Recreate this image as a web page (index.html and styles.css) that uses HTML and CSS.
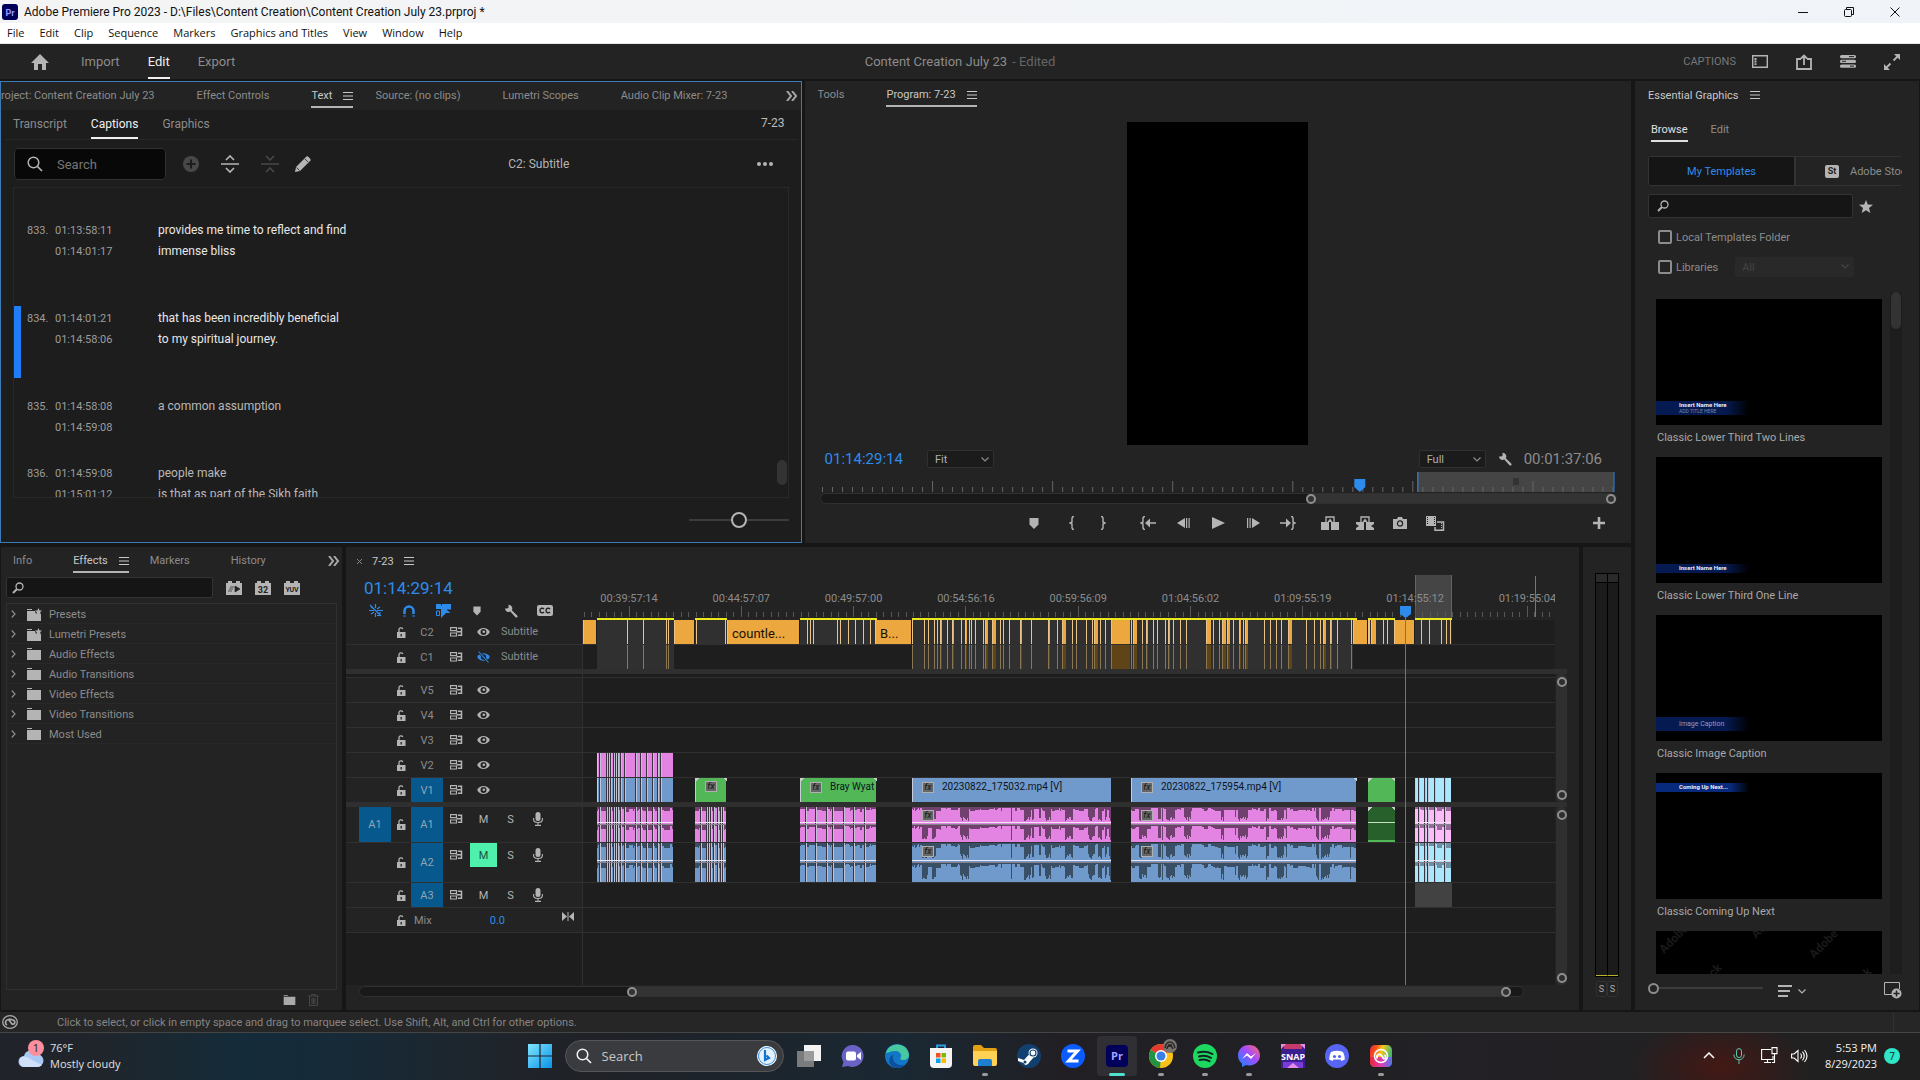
FILE: index.html
```html
<!DOCTYPE html>
<html lang="en">
<head>
    <meta charset="UTF-8">
    <meta name="viewport" content="width=device-width, initial-scale=1.0">
    <title>Adobe Premiere Pro 2023</title>
    <link rel="stylesheet" href="styles.css">
</head>
<body>
    <!-- icon sprite -->
    <svg class="sprite" width="0" height="0" aria-hidden="true">
        <symbol id="i-menu" viewBox="0 0 10 8"><path d="M0 .5h10M0 4h10M0 7.500h10" stroke="currentColor" stroke-width="1"/></symbol>
        <symbol id="i-more" viewBox="0 0 12 10"><path d="M1 0l4 5-4 5M6 0l4 5-4 5" fill="none" stroke="currentColor" stroke-width="2"/></symbol>
        <symbol id="i-chev" viewBox="0 0 8 5"><path d="M.5.5L4 4 7.500.5" fill="none" stroke="currentColor" stroke-width="1.200"/></symbol>
        <symbol id="i-right" viewBox="0 0 5 8"><path d="M.8.5L4 4 .8 7.500" fill="none" stroke="currentColor" stroke-width="1.200"/></symbol>
        <symbol id="i-find" viewBox="0 0 12 12"><circle cx="7.500" cy="4.500" r="3.500" fill="none" stroke="currentColor" stroke-width="1.300"/><path d="M5 7L1 11" stroke="currentColor" stroke-width="2"/></symbol>
        <symbol id="i-search" viewBox="0 0 16 16"><circle cx="6.500" cy="6.500" r="5.300" fill="none" stroke="currentColor" stroke-width="1.500"/><path d="M10.500 10.500L15 15" stroke="currentColor" stroke-width="1.700"/></symbol>
        <symbol id="i-wrench" viewBox="0 0 14 14"><path d="M1 4.500A3.600 3.600 0 0 0 6.300 7.600l5.200 5.600a1.200 1.200 0 0 0 1.700-1.700L7.800 6.200A3.600 3.600 0 0 0 4.500.8v3L3 4.600z" fill="currentColor"/></symbol>
        <symbol id="i-marker" viewBox="0 0 10 11"><path d="M.5 0h9v6.500L5 11 .5 6.500z" fill="currentColor"/></symbol>
        <symbol id="i-lock" viewBox="0 0 10 11"><path d="M1 5h8.500v6H1z" fill="currentColor"/><path d="M3 5V2.500C3 .8 6 .2 6.800 2" fill="none" stroke="currentColor" stroke-width="1.300"/><path d="M5.200 7v2.500" stroke="#232323" stroke-width="1.300"/></symbol>
        <symbol id="i-sync" viewBox="0 0 13 10"><path d="M.5.7h6v3h-6zM.5 6h6v3h-6z" fill="none" stroke="currentColor" stroke-width="1.200"/><path d="M8 1.200h3.500v7H8M6.500 4.800h5" fill="none" stroke="currentColor" stroke-width="1.500"/></symbol>
        <symbol id="i-eye" viewBox="0 0 13 10"><path d="M.2 5C2.500-.2 10.500-.2 12.800 5 10.500 10.200 2.500 10.200.2 5z" fill="currentColor"/><circle cx="6.500" cy="5" r="3" fill="#232323"/><circle cx="6.800" cy="4.800" r="1.300" fill="currentColor"/></symbol>
        <symbol id="i-eye-off" viewBox="0 0 13 12"><path d="M.2 6C2.500 1 10.500 1 12.800 6 10.500 11 2.500 11 .2 6z" fill="currentColor"/><circle cx="6.500" cy="6" r="2.700" fill="#232323"/><circle cx="6.500" cy="6" r="1.400" fill="currentColor"/><path d="M1.500 .5l10 11" stroke="#232323" stroke-width="2.600"/><path d="M1.500 .5l10 11" stroke="currentColor" stroke-width="1.100"/></symbol>
        <symbol id="i-mic" viewBox="0 0 10 14"><rect x="2.500" y="0" width="5" height="9" rx="2.500" fill="currentColor"/><path d="M.6 6v1.500C.6 11.500 9.400 11.500 9.400 7.500V6M5 10.500v3M2 13.400h6" fill="none" stroke="currentColor" stroke-width="1.100"/></symbol>
        <symbol id="i-folder" viewBox="0 0 14 12"><path d="M0 0h5v1H0zM0 2h14v10H0z" fill="currentColor"/></symbol>
        <symbol id="i-folder-star" viewBox="0 0 15 13"><path d="M0 1h5v1H0zM0 3h8l1 3 3-1 2 1.500V13H0z" fill="currentColor"/><path d="M11.500 0l1.100 2.400 2.400.2-1.800 1.700.6 2.600-2.300-1.400-2.300 1.400.6-2.600L8 2.600l2.400-.2z" fill="currentColor"/></symbol>
        <symbol id="i-cc" viewBox="0 0 16 11"><rect width="16" height="11" rx="2" fill="currentColor"/><path d="M7 4C6 2.800 3 2.800 3 5.500S6 8.200 7 7M13 4c-1-1.200-4-1.200-4 1.500S12 8.200 13 7" fill="none" stroke="#232323" stroke-width="1.400"/></symbol>
    </svg>

    <div class="titlebar">
        <svg class="pr-badge" viewBox="0 0 16 16"><rect width="16" height="16" rx="3" fill="#00005b"/><text x="8" y="12" text-anchor="middle" font-size="9" font-weight="bold" fill="#9999ff">Pr</text></svg>
        <span class="titlebar-text">Adobe Premiere Pro 2023 - D:\Files\Content Creation\Content Creation July 23.prproj *</span>
        <div class="window-buttons">
            <button title="Minimize"><svg width="10" height="10"><path d="M0 5.500h10" stroke="#111"/></svg></button>
            <button title="Restore"><svg width="10" height="10"><rect x=".5" y="2.500" width="7" height="7" rx="1" fill="none" stroke="#111"/><path d="M2.500 2V.5h7v7H8" fill="none" stroke="#111"/></svg></button>
            <button title="Close"><svg width="10" height="10"><path d="M.5.5l9 9M9.500.5l-9 9" stroke="#111"/></svg></button>
        </div>
    </div>
    <nav class="menubar">
        <a href="#">File</a><a href="#">Edit</a><a href="#">Clip</a><a href="#">Sequence</a><a href="#">Markers</a><a href="#">Graphics and Titles</a><a href="#">View</a><a href="#">Window</a><a href="#">Help</a>
    </nav>

    <header class="header">
        <div class="header-nav">
            <button class="home" title="Home"><svg width="18" height="16"><path d="M9 0l9 9h-3v7h-4v-6H7v6H3V9H0z" fill="#b4b4b4"/></svg></button>
            <button class="mode">Import</button>
            <button class="mode active">Edit</button>
            <button class="mode">Export</button>
        </div>
        <div class="project-name">Content Creation July 23 <span>- Edited</span></div>
        <div class="header-tools">
            <span class="workspace">CAPTIONS</span>
            <button title="Workspaces"><svg width="16" height="13"><path d="M.7.7h14.600v11.600H.7z" fill="none" stroke="currentColor" stroke-width="1.400"/><path d="M3.500 3v7" stroke="currentColor" stroke-width="2" stroke-dasharray="2 .6"/></svg></button>
            <button title="Quick export"><svg width="16" height="16"><path d="M5 5H1v10h14V5h-4M8 11V2M5 4.500L8 1.500l3 3" fill="none" stroke="currentColor" stroke-width="1.800"/></svg></button>
            <button title="Progress"><svg width="16" height="13"><rect width="16" height="3.200" rx="1.500" fill="currentColor"/><rect y="4.700" width="16" height="3.200" rx="1.500" fill="currentColor"/><rect y="9.500" width="16" height="3.200" rx="1.500" fill="currentColor"/><path d="M9 1.600h5M2 6.300h4M10 11.100h4" stroke="#232323"/></svg></button>
            <button title="Full screen"><svg width="16" height="16"><path d="M9.500 6.500L14 2M6.500 9.500L2 14" stroke="currentColor" stroke-width="1.800"/><path d="M10 0h6v6zM6 16H0v-6z" fill="currentColor"/></svg></button>
        </div>
    </header>

    <main class="workspace-area">
        <div class="left-area">
            <div class="top-row">
                <section class="panel text-panel">
                    <div class="tabs source-tabs">
                        <button class="tab">roject: Content Creation July 23</button>
                        <button class="tab">Effect Controls</button>
                        <button class="tab active">Text <svg class="burger"><use href="#i-menu"/></svg></button>
                        <button class="tab">Source: (no clips)</button>
                        <button class="tab">Lumetri Scopes</button>
                        <button class="tab">Audio Clip Mixer: 7-23</button>
                        <button class="tab-more" title="More panels"><svg width="12" height="10"><use href="#i-more"/></svg></button>
                    </div>
                    <div class="subtabs">
                        <button>Transcript</button>
                        <button class="active">Captions</button>
                        <button>Graphics</button>
                        <span class="sequence-name">7-23</span>
                    </div>
                    <div class="caption-tools">
                        <label class="caption-search">
                            <svg width="16" height="16"><use href="#i-search"/></svg>
                            <input type="text" placeholder="Search" aria-label="Search captions">
                        </label>
                        <button class="off" title="Add caption"><svg width="16" height="16"><circle cx="8" cy="8" r="8" fill="currentColor"/><path d="M8 3.500v9M3.500 8h9" stroke="#1d1d1d" stroke-width="2"/></svg></button>
                        <button title="Split caption"><svg width="18" height="18"><path d="M0 9h18M5 5l4-4 4 4M5 13l4 4 4-4" fill="none" stroke="currentColor" stroke-width="1.700"/></svg></button>
                        <button class="off" title="Merge captions"><svg width="18" height="18"><path d="M0 9h18M5 1l4 4 4-4M5 17l4-4 4 4" fill="none" stroke="currentColor" stroke-width="1.700"/></svg></button>
                        <button class="pencil" title="Edit caption"><svg width="16" height="16"><path d="M0 16l1-5L11.500.5c1-1 5 3 4 4L5 15z" fill="currentColor"/><path d="M10 3l3 3M1.500 11.500l3 3" stroke="#1d1d1d" stroke-width=".8"/></svg></button>
                        <span class="caption-track">C2: Subtitle</span>
                        <button title="More"><svg width="16" height="4"><circle cx="2" cy="2" r="2" fill="currentColor"/><circle cx="8" cy="2" r="2" fill="currentColor"/><circle cx="14" cy="2" r="2" fill="currentColor"/></svg></button>
                    </div>
                    <div class="caption-box">
                        <ul class="captions">
                            <li class="caption shown"><span class="num">833.</span><span class="times">01:13:58:11<br>01:14:01:17</span><p>provides me time to reflect and find<br>immense bliss</p></li>
                            <li class="caption shown current"><span class="num">834.</span><span class="times">01:14:01:21<br>01:14:58:06</span><p>that has been incredibly beneficial<br>to my spiritual journey.</p></li>
                            <li class="caption"><span class="num">835.</span><span class="times">01:14:58:08<br>01:14:59:08</span><p>a common assumption</p></li>
                            <li class="caption"><span class="num">836.</span><span class="times">01:14:59:08<br>01:15:01:12</span><p>people make<br>is that as part of the Sikh faith,</p></li>
                        </ul>
                        <div class="caption-scroll"></div>
                    </div>
                    <div class="text-size"><input type="range" aria-label="Text size" value="50"></div>
                </section>

                <section class="panel program-panel">
                    <div class="tabs">
                        <button class="tab">Tools</button>
                        <button class="tab active">Program: 7-23 <svg class="burger"><use href="#i-menu"/></svg></button>
                    </div>
                    <div class="viewer"><div class="frame"></div></div>
                    <div class="program-info">
                        <span class="timecode">01:14:29:14</span>
                        <span class="picker"><select aria-label="Zoom level"><option>Fit</option></select><svg width="8" height="5"><use href="#i-chev"/></svg></span>
                        <span class="picker resolution"><select aria-label="Playback resolution"><option>Full</option></select><svg width="8" height="5"><use href="#i-chev"/></svg></span>
                        <button class="wrench" title="Settings"><svg width="14" height="14"><use href="#i-wrench"/></svg></button>
                        <span class="duration">00:01:37:06</span>
                    </div>
                    <div class="program-ruler"><svg id="program-ruler" viewBox="0 0 797 21" preserveAspectRatio="none"></svg></div>
                    <div class="zoombar program-zoom"><div class="zoombar-thumb"></div></div>
                    <div class="transport">
                        <div class="transport-buttons">
                            <button class="first" title="Add marker"><svg width="10" height="11"><use href="#i-marker"/></svg></button>
                            <button class="mark" title="Mark in"><svg width="6" height="14"><path d="M5 .5H4L3 2v4L1 7l2 1v4l1 1.500h1" fill="none" stroke="currentColor" stroke-width="1.400"/></svg></button>
                            <button class="mark last" title="Mark out"><svg width="6" height="14"><path d="M1 .5h1L3 2v4l2 1-2 1v4l-1 1.500H1" fill="none" stroke="currentColor" stroke-width="1.400"/></svg></button>
                            <button title="Go to in"><svg width="16" height="14"><path d="M5 .5H4L3 2v4L1 7l2 1v4l1 1.500h1M8 7h8" fill="none" stroke="currentColor" stroke-width="1.400"/><path d="M5 7l5-4.500v9z" fill="currentColor"/></svg></button>
                            <button title="Step back"><svg width="13" height="10"><path d="M8 0v10L0 5zM9 0h1.200v10H9zM11.500 0h1.200v10h-1.200z" fill="currentColor"/></svg></button>
                            <button title="Play"><svg width="13" height="12"><path d="M0 0l13 6-13 6z" fill="currentColor"/></svg></button>
                            <button title="Step forward"><svg width="13" height="10"><path d="M5 0v10l8-5zM0 0h1.200v10H0zM2.500 0h1.200v10H2.500z" fill="currentColor"/></svg></button>
                            <button class="wide" title="Go to out"><svg width="16" height="14"><path d="M11 .5h1L13 2v4l2 1-2 1v4l-1 1.500h-1M0 7h8" fill="none" stroke="currentColor" stroke-width="1.400"/><path d="M11 7L6 2.500v9z" fill="currentColor"/></svg></button>
                            <button title="Lift"><svg width="18" height="14"><path d="M0 6h8v8H0zM10 6h8v8h-8z" fill="currentColor"/><path d="M5 7V1h8v6" fill="none" stroke="currentColor" stroke-width="1.300"/><path d="M6.500 6L9 2.500 11.500 6z" fill="currentColor"/></svg></button>
                            <button title="Extract"><svg width="18" height="14"><path d="M0 6h8v8H0zM10 6h8v8h-8z" fill="currentColor"/><path d="M0 8l3 2-3 2zM18 8l-3 2 3 2z" fill="#232323"/><path d="M5 7V1h8v6" fill="none" stroke="currentColor" stroke-width="1.300"/><path d="M6.500 6L9 2.500 11.500 6z" fill="currentColor"/></svg></button>
                            <button title="Export frame"><svg width="14" height="12"><path d="M0 2h4l1-2h4l1 2h4v10H0z" fill="currentColor"/><circle cx="7" cy="6.500" r="2.600" fill="none" stroke="#232323" stroke-width="1.200"/></svg></button>
                            <button title="Comparison view"><svg width="19" height="15"><path d="M0 0h10v10H0z" fill="currentColor"/><path d="M1.500 1v8M8.500 1v8" stroke="#232323" stroke-dasharray="1 1"/><path d="M11 6h6.500v8.300H9V11" fill="none" stroke="currentColor" stroke-width="1.500"/><path d="M15.500 7v7" stroke="currentColor" stroke-dasharray="1 1"/></svg></button>
                        </div>
                        <button class="add" title="Button editor"><svg width="12" height="12"><path d="M6 0v12M0 6h12" stroke="currentColor" stroke-width="2.600"/></svg></button>
                    </div>
                </section>
            </div>

            <div class="bottom-row">
                <section class="panel effects-panel">
                    <div class="tabs">
                        <button class="tab">Info</button>
                        <button class="tab active">Effects <svg class="burger"><use href="#i-menu"/></svg></button>
                        <button class="tab">Markers</button>
                        <button class="tab">History</button>
                        <button class="tab-more" title="More panels"><svg width="12" height="10"><use href="#i-more"/></svg></button>
                    </div>
                    <div class="effects-search">
                        <label class="field"><svg width="12" height="12"><use href="#i-find"/></svg><input type="text" aria-label="Search effects"></label>
                        <button title="Accelerated effects"><svg width="16" height="14"><path d="M0 2h2V0h4v2h4V0h4v2h2v12H0z" fill="#b4b4b4"/><path d="M9 5v6l5-3zM4 6h4M3 8h4M2 10h4" fill="#232323" stroke="#232323" stroke-width=".7"/></svg></button>
                        <button title="32-bit color"><svg width="16" height="14"><path d="M0 2h2V0h4v2h4V0h4v2h2v12H0z" fill="#b4b4b4"/><text x="8" y="11.500" text-anchor="middle" font-size="9" font-weight="bold" fill="#232323">32</text></svg></button>
                        <button title="YUV effects"><svg width="16" height="14"><path d="M0 2h2V0h4v2h4V0h4v2h2v12H0z" fill="#b4b4b4"/><text x="8" y="11" text-anchor="middle" font-size="7" font-weight="bold" fill="#232323">YUV</text></svg></button>
                    </div>
                    <ul class="effects-list">
                        <li><svg class="arrow"><use href="#i-right"/></svg><svg class="folder star"><use href="#i-folder-star"/></svg>Presets</li>
                        <li><svg class="arrow"><use href="#i-right"/></svg><svg class="folder star"><use href="#i-folder-star"/></svg>Lumetri Presets</li>
                        <li><svg class="arrow"><use href="#i-right"/></svg><svg class="folder"><use href="#i-folder"/></svg>Audio Effects</li>
                        <li><svg class="arrow"><use href="#i-right"/></svg><svg class="folder"><use href="#i-folder"/></svg>Audio Transitions</li>
                        <li><svg class="arrow"><use href="#i-right"/></svg><svg class="folder"><use href="#i-folder"/></svg>Video Effects</li>
                        <li><svg class="arrow"><use href="#i-right"/></svg><svg class="folder"><use href="#i-folder"/></svg>Video Transitions</li>
                        <li><svg class="arrow"><use href="#i-right"/></svg><svg class="folder"><use href="#i-folder"/></svg>Most Used</li>
                    </ul>
                    <div class="effects-footer">
                        <button title="New bin"><svg width="13" height="10"><use href="#i-folder"/></svg></button>
                        <button class="off" title="Delete"><svg width="11" height="12"><path d="M0 2h11M3.500 2V.6h4V2M1.500 2v9.400h8V2M4 4v6M5.500 4v6M7 4v6" fill="none" stroke="currentColor"/></svg></button>
                    </div>
                </section>

                <section class="panel timeline-panel">
                    <div class="timeline-tab">
                        <button class="close" title="Close"><svg width="5" height="5"><path d="M0 0l5 5M5 0L0 5" stroke="currentColor"/></svg></button>
                        <span>7-23</span>
                        <svg class="burger"><use href="#i-menu"/></svg>
                    </div>
                    <div class="timeline-body">
                        <div class="timeline-top">
                            <div class="timeline-head">
                                <span class="timecode">01:14:29:14</span>
                                <div class="timeline-tools">
                                    <button class="on" title="Insert as nest"><svg width="15" height="13"><path d="M7.500 0v4M7.500 9v4M1 6.500h5M9 6.500h6M3 3l3 2M12 3L9 5M3 10l3-2M9 9h4M9 11.500h3M2 1l11 11" fill="none" stroke="currentColor" stroke-width="1.200"/></svg></button>
                                    <button class="on" title="Snap"><svg width="12" height="12"><path d="M1.500 9V6a4.500 4.500 0 0 1 9 0v3" fill="none" stroke="currentColor" stroke-width="2.500"/><path d="M.2 10h2.600v2H.2zM9.200 10h2.600v2H9.200z" fill="#1d5c99"/></svg></button>
                                    <button class="on" title="Linked selection"><svg width="15" height="14"><path d="M0 0h5v5H0zM6 0h9v5.500H6zM5 1l9.500 8H10l-5 5z" fill="currentColor"/><path d="M.5 7h3v4.500h-3z" fill="none" stroke="currentColor"/></svg></button>
                                    <button title="Add marker"><svg width="8" height="10"><use href="#i-marker"/></svg></button>
                                    <button title="Timeline settings"><svg width="14" height="14"><use href="#i-wrench"/></svg></button>
                                    <button title="Caption options"><svg width="16" height="11"><use href="#i-cc"/></svg></button>
                                </div>
                            </div>
                            <div class="ruler" id="ruler"></div>
                        </div>
                        <div class="track-section" id="caption-tracks"><div class="tracks"></div><div class="no-scroll"></div></div>
                        <div class="divider"></div>
                        <div class="track-section" id="video-tracks"><div class="tracks"><div class="track-spacer"></div></div><div class="vscroll"></div></div>
                        <div class="divider"></div>
                        <div class="track-section grow" id="audio-tracks"><div class="tracks"></div><div class="vscroll"></div></div>
                        <div class="playhead-layer" id="playhead-layer"></div>
                    </div>
                    <div class="zoombar timeline-zoom"><div class="zoombar-thumb"></div></div>
                </section>

                <section class="panel meters-panel">
                    <div class="meters"><div class="meter"></div><div class="meter"></div></div>
                    <div class="solo"><button>S</button><button>S</button></div>
                </section>
            </div>
        </div>

        <aside class="panel graphics-panel">
            <div class="graphics-title">Essential Graphics <svg class="burger"><use href="#i-menu"/></svg></div>
            <div class="graphics-tabs"><button class="active">Browse</button><button>Edit</button></div>
            <div class="template-source">
                <button class="active">My Templates</button>
                <button><span class="st">St</span>Adobe Stock</button>
            </div>
            <div class="template-search">
                <label class="field"><svg width="12" height="12"><use href="#i-find"/></svg><input type="text" aria-label="Search templates"></label>
                <button title="Favorites"><svg width="14" height="13"><path d="M7 0l1.800 4.500 5.200.3-4 3.200 1.400 5L7 10.200 2.600 13 4 8 0 4.800l5.200-.3z" fill="#b4b4b4"/></svg></button>
            </div>
            <div class="template-filter"><label><input type="checkbox">Local Templates Folder</label></div>
            <div class="template-filter">
                <label><input type="checkbox">Libraries</label>
                <span class="picker disabled"><select aria-label="Library" disabled><option>All</option></select><svg width="8" height="5"><use href="#i-chev"/></svg></span>
            </div>
            <div class="template-list">
                <div class="templates">
                    <figure><div class="thumb low"><div class="banner tall"><b>Insert Name Here</b><small>ADD TITLE HERE</small></div></div><figcaption>Classic Lower Third Two Lines</figcaption></figure>
                    <figure><div class="thumb low"><div class="banner"><b>Insert Name Here</b></div></div><figcaption>Classic Lower Third One Line</figcaption></figure>
                    <figure><div class="thumb low"><div class="banner tall dim"><span>Image Caption</span></div></div><figcaption>Classic Image Caption</figcaption></figure>
                    <figure><div class="thumb"><div class="banner bright"><b>Coming Up Next...</b></div></div><figcaption>Classic Coming Up Next</figcaption></figure>
                    <figure><div class="thumb"><svg width="226" height="126" class="watermark"><text transform="translate(8 23) rotate(-45)">Adobe Stock</text><text transform="translate(100 8) rotate(-45)">Adobe Stock</text><text transform="translate(158 28) rotate(-45)">Adobe Stock</text><text transform="translate(18 86) rotate(-45)">Adobe Stock</text><text transform="translate(168 90) rotate(-45)">Adobe Stock</text></svg></div></figure>
                </div>
                <div class="template-scroll"><div></div></div>
            </div>
            <div class="template-footer">
                <input type="range" aria-label="Thumbnail size" value="0">
                <button class="sort" title="Sort"><svg width="14" height="12"><path d="M0 1h14M0 6h12M0 11h10" stroke="currentColor" stroke-width="2"/></svg><svg width="8" height="5"><use href="#i-chev"/></svg></button>
                <button class="new" title="New layer"><svg width="18" height="17"><path d="M8 12.500H.5v-12h15V7" fill="none" stroke="currentColor"/><circle cx="12.500" cy="11.500" r="5" fill="currentColor"/><path d="M12.500 8.500v6M9.500 11.500h6" stroke="#232323" stroke-width="1.500"/></svg></button>
            </div>
        </aside>
    </main>

    <footer class="statusbar">
        <svg width="16" height="14" viewBox="0 0 16 14"><ellipse cx="8" cy="7" rx="7.300" ry="6.300" fill="none" stroke="#aaa" stroke-width="1.300"/><path d="M5 10C2 8 4 4 7 5l3 4c3 1 4-3 1-4S6 3 8 6" fill="none" stroke="#aaa" stroke-width="1.600"/></svg>
        <span>Click to select, or click in empty space and drag to marquee select. Use Shift, Alt, and Ctrl for other options.</span>
    </footer>

    <div class="taskbar">
        <button class="weather">
            <svg width="28" height="32" viewBox="0 0 28 32"><path d="M6 27a5.500 5.500 0 0 1 0-11 7 7 0 0 1 13-2 6.500 6.500 0 0 1 0 13z" fill="#a9c8f3"/><path d="M6 27a5.500 5.500 0 0 1-2-10c5-2 10 4 20 8-1 1-3 2-5 2z" fill="#cfe0f8"/><circle cx="18" cy="8" r="8" fill="#ff8f9c"/><text x="18" y="12" text-anchor="middle" font-size="11" fill="#222">1</text></svg>
            <span>76°F<br>Mostly cloudy</span>
        </button>
        <div class="dock">
            <button class="app" title="Start"><svg width="24" height="24"><path d="M0 0h11.400v11.400H0zM12.600 0H24v11.400H12.600zM0 12.600h11.400V24H0zM12.600 12.600H24V24H12.600z" fill="url(#g-win)"/><defs><linearGradient id="g-win" x2="1" y2="1"><stop stop-color="#7fe6ff"/><stop offset="1" stop-color="#0a93e8"/></linearGradient></defs></svg></button>
            <label class="dock-search"><svg width="16" height="16"><use href="#i-search"/></svg><input type="text" placeholder="Search" aria-label="Search"><svg width="20" height="20"><circle cx="10" cy="10" r="10" fill="#fff"/><circle cx="10" cy="10" r="8.500" fill="#e4f1fb" stroke="#2f8fe0"/><path d="M8 4v10l4-2-2.500-2.500" fill="none" stroke="#1372d6" stroke-width="2.200"/></svg></label>
            <button class="app" title="Task view"><svg width="24" height="24"><rect x="7" y="1" width="17" height="16" fill="#f3f3f3"/><rect x="0" y="7" width="17" height="16" fill="#8b8b8b" opacity=".85"/></svg></button>
            <button class="app" title="Chat"><svg width="24" height="24"><path d="M12 1a11 11 0 1 1-5 21l-6 1 1.500-5A11 11 0 0 1 12 1z" fill="#6a62c4"/><rect x="5" y="7.500" width="10" height="9" rx="2" fill="#fff"/><path d="M16 11l4-3v8l-4-3z" fill="#fff"/></svg></button>
            <button class="app" title="Edge"><svg width="24" height="24"><circle cx="12" cy="12" r="12" fill="#1377c8"/><path d="M1 9C4-3 23-2 24 11c0 5-6 6-9 4 3-4 0-8-5-8-4 0-7 2-9 2z" fill="#47c8a0"/><path d="M8 12c-1 6 4 10 11 9-3 4-11 4-14-1-2-4 0-9 5-10-1 0-2 1-2 2z" fill="#0c4f9c"/></svg></button>
            <button class="app" title="Store"><svg width="24" height="24"><path d="M8 5V1.500h8V5" fill="none" stroke="#2c9ae0" stroke-width="2"/><path d="M1 4h22v16a4 4 0 0 1-4 4H5a4 4 0 0 1-4-4z" fill="#f4f4f4"/><path d="M7 9h4.500v4.500H7z" fill="#f25022"/><path d="M12.500 9H17v4.500h-4.500z" fill="#7fba00"/><path d="M7 14.500h4.500V19H7z" fill="#00a4ef"/><path d="M12.500 14.500H17V19h-4.500z" fill="#ffb900"/></svg></button>
            <button class="app run" title="File Explorer"><svg width="24" height="24"><path d="M0 3q0-2 2-2h6l3 3h11q2 0 2 2v6H0z" fill="#e2a012"/><path d="M0 7h24v13q0 2-2 2H2q-2 0-2-2z" fill="#ffd255"/><path d="M5 22v-5q0-2 2-2h10q2 0 2 2v5z" fill="#1c7fd0"/></svg></button>
            <button class="app" title="Steam"><svg width="24" height="24"><circle cx="12" cy="12" r="12" fill="#12406e"/><path d="M1 14l6 2 4.500-5 5 2.500-4 4.500-1 1.500q-3 3-5-.5L1 17z" fill="#fff"/><circle cx="16" cy="9" r="4.500" fill="#fff"/><circle cx="16" cy="9" r="3" fill="none" stroke="#12406e" stroke-width="1.200"/><circle cx="8" cy="18" r="1.500" fill="#12406e"/></svg></button>
            <button class="app" title="Zoom"><svg width="24" height="24"><circle cx="12" cy="12" r="12" fill="#0b5cff"/><path d="M6.500 7h10L7.500 17h10" fill="none" stroke="#fff" stroke-width="3"/></svg></button>
            <button class="app focus" title="Premiere Pro"><svg width="22" height="22"><rect width="22" height="22" rx="4" fill="#00005b"/><text x="11" y="15" text-anchor="middle" font-size="11" font-weight="bold" fill="#a3a3ff">Pr</text></svg></button>
            <button class="app run" title="Chrome"><svg class="chrome" width="24" height="24"><circle cx="12" cy="12" r="12" fill="#fbc116"/><path d="M12 12L1.600 6A12 12 0 0 1 22.400 6z" fill="#e33b2e"/><path d="M12 12l-1 12A12 12 0 0 1 1.600 6z" fill="#229342"/><circle cx="12" cy="12" r="6" fill="#fff"/><circle cx="12" cy="12" r="4.500" fill="#3a7ee8"/><circle cx="21" cy="2" r="7" fill="#77736f"/><path d="M16 4c1-5 3-6 5-6s4 2 5 6M18 5c0-4 5-4 6 0M19 1h4" fill="none" stroke="#292725" stroke-width="1.400"/></svg></button>
            <button class="app run" title="Spotify"><svg width="24" height="24"><circle cx="12" cy="12" r="12" fill="#1ed760"/><path d="M5 8.500c5-1.500 10-1 14.500 1.500M6 12.500c4-1.200 8-.8 12 1.300M6.500 16c3.500-1 7-.6 10 1.200" fill="none" stroke="#122" stroke-width="2" stroke-linecap="round"/></svg></button>
            <button class="app run" title="Messenger"><svg width="24" height="24"><defs><linearGradient id="g-msg" x1="0" y1="1" x2="1" y2="0"><stop stop-color="#0a8cff"/><stop offset=".55" stop-color="#a24bff"/><stop offset="1" stop-color="#ff6a68"/></linearGradient></defs><path d="M12 1C5 1 1 6 1 11.500c0 3.500 1.500 6 4 8V23l4-2c9 2 14-4 14-9.500S19 1 12 1z" fill="url(#g-msg)"/><path d="M5 15l5-6 4 3.500L19 9l-5 6-4-3.500z" fill="#fff"/></svg></button>
            <button class="app" title="Marvel Snap"><svg width="24" height="24"><rect width="24" height="24" fill="#3b1f8f"/><path d="M3 0h18v5H3z" fill="#c43a6a"/><path d="M2 18h20v6H2z" fill="#7b3bd6"/><path d="M0 5l5-5H0zM24 5l-5-5h5zM6 24l6-5 6 5z" fill="#e58be8"/><text x="12" y="16" text-anchor="middle" font-size="9" font-weight="bold" fill="#fff">SNAP</text></svg></button>
            <button class="app" title="Discord"><svg width="24" height="24"><circle cx="12" cy="12" r="12" fill="#5865f2"/><path d="M6 8q6-2.500 12 0 2 4 1.800 7.500L16.500 17l-1-1.500h-7l-1 1.500-3.300-1.500Q4 12 6 8z" fill="#fff"/><circle cx="9.500" cy="12.500" r="1.600" fill="#5865f2"/><circle cx="14.500" cy="12.500" r="1.600" fill="#5865f2"/></svg></button>
            <button class="app run" title="Creative Cloud"><svg width="22" height="22"><defs><linearGradient id="g-cc" x2="1" y2=".3"><stop stop-color="#e2283c"/><stop offset=".3" stop-color="#f9551b"/><stop offset=".55" stop-color="#f4c81b"/><stop offset="1" stop-color="#3fb870"/></linearGradient><linearGradient id="g-cc2" x2="1"><stop stop-color="#e2283c"/><stop offset=".5" stop-color="#e23ab0"/><stop offset="1" stop-color="#4a78f0"/></linearGradient></defs><rect width="22" height="22" rx="5" fill="url(#g-cc)"/><path d="M0 12h22v5q0 5-5 5H5q-5 0-5-5z" fill="url(#g-cc2)"/><circle cx="11" cy="11" r="6.500" fill="none" stroke="#fff" stroke-width="1.500"/><path d="M7.500 13.500c-2-3 2-6 4-3l2 3c2 1 3-2 1-3.500" fill="none" stroke="#fff" stroke-width="1.800"/></svg></button>
        </div>
        <div class="tray">
            <button title="Hidden icons"><svg width="12" height="7"><path d="M1 6l5-5 5 5" fill="none" stroke="#fff" stroke-width="1.500"/></svg></button>
            <button title="Microphone"><svg width="12" height="16"><rect x="3.500" y=".6" width="5" height="9" rx="2.500" fill="none" stroke="#5cc8ae"/><path d="M.8 6.500c0 7 10.400 7 10.400 0M6 12v4" fill="none" stroke="#5cc8ae"/></svg></button>
            <button title="Network"><svg width="17" height="17"><path d="M10 2.500H.6v10H12V9M3 15.500h7M6.500 12.500v3M11 .6h5v6h-5zM13.500 7v8.500H11" fill="none" stroke="#fff" stroke-width="1.100"/></svg></button>
            <button title="Volume"><svg width="17" height="14"><path d="M.6 5v4h2.500L7 12.500v-11L3.100 5zM9.500 4.500q2 2.500 0 5M11.500 2.700q3.500 4.300 0 8.600M13.500 1q5 6 0 12" fill="none" stroke="#fff" stroke-width="1.100"/></svg></button>
            <div class="clock">5:53 PM<br>8/29/2023</div>
            <span class="badge">7</span>
        </div>
    </div>

    <script src="timeline.js"></script>
</body>
</html>
```
FILE: styles.css
```css
:root {
    --panel: #232323;
    --gap: #161616;
    --lane: #1e1e1e;
    --line: #303030;
    --text: #8c8c8c;
    --bright: #c8c8c8;
    --blue: #2d8ceb;
}

*,
*::before,
*::after {
    margin: 0;
    padding: 0;
    box-sizing: border-box;
}

body {
    display: flex;
    flex-direction: column;
    height: 100vh;
    overflow: hidden;
    background: var(--gap);
    color: var(--text);
    font-family: 'Roboto', sans-serif;
    font-size: 11px;
}

button,
input,
select {
    font: inherit;
    color: inherit;
    background: none;
    border: none;
    outline: none;
}

button {
    display: inline-flex;
    align-items: center;
    justify-content: center;
    white-space: nowrap;
}

svg {
    flex: none;
    display: block;
}

ul {
    list-style: none;
}

a {
    color: inherit;
    text-decoration: none;
}

.sprite {
    position: absolute;
}

.burger {
    width: 10px;
    height: 8px;
}

/* title and menu bars */
.titlebar {
    display: flex;
    align-items: center;
    flex: none;
    height: 23px;
    padding-left: 2px;
    background: linear-gradient(to right, #f4f4f4, #f0f4f9);
    color: #111;
    font-size: 12px;
}

.pr-badge {
    width: 16px;
    height: 16px;
    margin-right: 6px;
}

.window-buttons {
    display: flex;
    margin-left: auto;
    padding-right: 2px;
}

.window-buttons button {
    width: 46px;
    height: 20px;
}

.menubar {
    display: flex;
    gap: 15px;
    flex: none;
    height: 20px;
    padding-left: 7px;
    background: #fff;
    color: #111;
    font-family: 'Open Sans', sans-serif;
    font-size: 11px;
    line-height: 20px;
}

/* header */
.header {
    display: grid;
    grid-template-columns: 1fr auto 1fr;
    align-items: center;
    flex: none;
    height: 38px;
    border-top: 1px solid #e6e6e6;
    border-bottom: 2px solid var(--gap);
    background: var(--panel);
    font-size: 13px;
}

.header-nav {
    display: flex;
    gap: 28px;
    height: 35px;
    padding-left: 31px;
}

.home {
    margin-right: 4px;
}

.mode {
    border-bottom: 2px solid transparent;
    padding-top: 2px;
}

.mode.active {
    color: #f0f0f0;
    border-color: #f0f0f0;
}

.project-name span {
    color: #666;
    margin-left: 2px;
}

.header-tools {
    display: flex;
    align-items: center;
    justify-content: flex-end;
    gap: 28px;
    padding-right: 20px;
    color: #b4b4b4;
}

.workspace {
    color: #777;
    font-size: 11px;
    margin-right: -12px;
}

/* panels */
.workspace-area {
    display: flex;
    gap: 4px;
    flex: 1;
    min-height: 0;
    padding: 0 1px 2px 0;
}

.left-area {
    display: flex;
    flex-direction: column;
    gap: 4px;
    flex: 1;
    min-width: 0;
}

.panel {
    display: flex;
    flex-direction: column;
    background: var(--panel);
    min-width: 0;
}

.top-row,
.bottom-row {
    display: flex;
    min-height: 0;
}

.top-row {
    flex: 462;
    gap: 3px;
}

.bottom-row {
    flex: 463;
    gap: 4px;
    padding-left: 1px;
}

.tabs {
    display: flex;
    flex: none;
    height: 28px;
    overflow: hidden;
}

.tab {
    height: 26px;
    padding-top: 3px;
    border-bottom: 2px solid transparent;
    gap: 11px;
}

.tab.active {
    color: var(--bright);
    border-color: #b4b4b4;
}

.tab-more {
    margin-left: auto;
    color: #aaa;
}

/* text panel */
.text-panel {
    flex: 801;
    border: 1px solid #3d7ab8;
    background: #1d1d1d;
}

.source-tabs {
    gap: 42px;
    padding-right: 3px;
    background: var(--panel);
}

.source-tabs .tab.active {
    margin-right: -20px;
}

.subtabs {
    display: flex;
    gap: 24px;
    flex: none;
    height: 30px;
    margin: 0 4px;
    padding: 0 12px 0 8px;
    border-bottom: 1px solid #282828;
    font-size: 12px;
}

.subtabs button {
    border-bottom: 2px solid transparent;
}

.subtabs .active {
    color: #f0f0f0;
    border-color: #f0f0f0;
}

.sequence-name {
    margin-left: auto;
    line-height: 27px;
    color: #bbb;
}

.caption-tools {
    display: flex;
    align-items: center;
    gap: 22px;
    flex: none;
    margin: 8px 28px 7px 13px;
    color: #b4b4b4;
    font-size: 12px;
}

.caption-search {
    display: flex;
    align-items: center;
    gap: 14px;
    width: 152px;
    height: 32px;
    margin-right: -5px;
    padding-left: 12px;
    border: 1px solid #303030;
    border-radius: 4px;
    background: #080808;
    font-size: 13px;
}

.caption-search input {
    width: 100px;
}

.caption-search input::placeholder {
    color: #777;
}

.caption-tools .off,
.effects-footer .off {
    color: #484848;
}

.caption-tools .pencil {
    margin-left: -6px;
}

.caption-track {
    flex: 1;
    padding-left: 10px;
    text-align: center;
}

.caption-box {
    display: flex;
    flex: 1;
    min-height: 0;
    margin: 0 12px;
    border: 1px solid #282828;
    overflow: hidden;
}

.captions {
    flex: 1;
    padding-top: 30px;
    font-size: 12px;
    line-height: 21px;
}

.caption {
    display: flex;
    margin-bottom: 16px;
    padding-left: 6px;
    border-left: 7px solid transparent;
    color: #9c9c9c;
}

.caption.current {
    border-color: #1f7ef5;
}

.caption .num,
.caption .times {
    padding-top: 2px;
    font-size: 11px;
}

.caption .num {
    width: 28px;
}

.caption .times {
    width: 103px;
}

.caption p {
    padding: 2px 0 28px;
    color: #b8b8b8;
}

.caption.shown p {
    color: #e8e8e8;
}

.caption-scroll {
    align-self: flex-end;
    width: 10px;
    height: 25px;
    margin: 0 1px 12px;
    border-radius: 5px;
    background: #333;
}

.text-size {
    display: flex;
    align-items: center;
    justify-content: flex-end;
    flex: none;
    height: 44px;
    padding-right: 12px;
}

input[type="range"] {
    appearance: none;
    width: 100px;
    height: 16px;
    background: linear-gradient(#3c3c3c, #3c3c3c) center / 100% 2px no-repeat;
}

input[type="range"]::-webkit-slider-thumb {
    appearance: none;
    width: 16px;
    height: 16px;
    border: 2px solid #b4b4b4;
    border-radius: 50%;
    background: #1d1d1d;
}

/* program panel */
.program-panel {
    flex: 828;
}

.program-panel .tabs {
    gap: 42px;
    padding-left: 13px;
}

.viewer {
    display: flex;
    justify-content: center;
    flex: 1;
    min-height: 0;
    padding: 13px 0 4px;
}

.frame {
    aspect-ratio: 182 / 324;
    background: #000;
}

.program-info {
    display: flex;
    align-items: center;
    flex: none;
    height: 20px;
    padding: 0 29px 0 20px;
}

.timecode {
    color: var(--blue);
    font-size: 15px;
}

.duration {
    font-size: 15px;
}

.picker {
    position: relative;
    margin-left: 24px;
}

.picker select {
    appearance: none;
    width: 67px;
    height: 18px;
    padding-left: 7px;
    border: 1px solid #303030;
    border-radius: 2px;
    background: #1b1b1b;
    color: #b0b0b0;
}

.picker svg {
    position: absolute;
    right: 5px;
    top: 7px;
}

.resolution {
    margin-left: auto;
}

.wrench {
    margin: 0 12px;
    color: #b4b4b4;
}

.program-ruler {
    flex: none;
    margin: 3px 14px 0 15px;
}

.program-ruler svg {
    width: 100%;
    height: 21px;
}

.zoombar {
    flex: none;
    height: 11px;
    border: 1px solid #303030;
    border-radius: 6px;
    background: #191919;
}

.zoombar-thumb {
    display: flex;
    justify-content: space-between;
    align-items: center;
    height: 100%;
    border-radius: 5px;
    background: #333;
}

.zoombar-thumb::before,
.zoombar-thumb::after,
.vscroll::before,
.vscroll::after {
    content: '';
    flex: none;
    width: 10px;
    height: 10px;
    border: 2px solid #8f8f8f;
    border-radius: 50%;
}

.program-zoom {
    margin: 0 14px 0 15px;
}

.program-zoom .zoombar-thumb {
    width: 39%;
    margin-left: 61%;
}

.transport {
    display: grid;
    grid-template-columns: 1fr auto 1fr;
    align-items: center;
    flex: none;
    height: 39px;
    padding: 0 0 1px 34px;
    color: #b4b4b4;
}

.transport-buttons {
    display: flex;
    grid-column: 2;
}

.transport-buttons button {
    width: 35px;
    height: 20px;
}

.transport-buttons .first {
    margin-right: 5px;
}

.transport-buttons .mark {
    width: 31px;
}

.transport-buttons .last {
    margin-right: 12px;
}

.transport-buttons .wide {
    margin-right: 7px;
}

.add {
    justify-self: end;
    margin-right: 26px;
}

/* effects panel */
.effects-panel {
    flex: 341;
}

.effects-panel .tabs {
    gap: 41px;
    padding: 0 2px 0 12px;
}

.effects-panel .tab.active {
    margin-right: -20px;
}

.effects-search {
    display: flex;
    gap: 13px;
    flex: none;
    height: 21px;
    margin: 2px 42px 5px 5px;
}

.field {
    display: flex;
    align-items: center;
    flex: 1;
    height: 21px;
    padding-left: 5px;
    border: 1px solid #333;
    border-radius: 2px;
    background: #151515;
    color: #b4b4b4;
}

.field input {
    flex: 1;
    min-width: 0;
}

.effects-list {
    flex: 1;
    min-height: 0;
    margin: 0 5px;
    border: 1px solid #303030;
}

.effects-list li {
    display: flex;
    align-items: center;
    height: 20px;
    padding: 1px 0 0 4px;
    border-bottom: 1px solid #282828;
}

.arrow {
    width: 5px;
    height: 8px;
    margin-right: 11px;
}

.folder {
    width: 14px;
    height: 12px;
    margin-right: 8px;
    color: #b4b4b4;
}

.folder.star {
    width: 15px;
    height: 13px;
    margin-right: 7px;
}

.effects-footer {
    display: flex;
    justify-content: flex-end;
    gap: 12px;
    flex: none;
    height: 20px;
    padding-right: 23px;
    color: #aaa;
}

/* timeline */
.timeline-panel {
    flex: 1233;
}

.timeline-tab {
    display: flex;
    align-items: center;
    flex: none;
    gap: 10px;
    height: 28px;
    padding-left: 11px;
    color: var(--bright);
}

.timeline-tab .close {
    color: #888;
}

.timeline-body {
    position: relative;
    display: flex;
    flex-direction: column;
    flex: 1;
    min-height: 0;
    padding-right: 12px;
}

.timeline-top {
    display: flex;
    flex: none;
    height: 45px;
    padding-right: 12px;
}

.timeline-head {
    width: 237px;
    padding-left: 18px;
}

.timeline-head .timecode {
    display: block;
    font-size: 17px;
    line-height: 26px;
}

.timeline-tools {
    display: flex;
    margin-left: -6px;
    color: #b4b4b4;
}

.timeline-tools button {
    width: 34px;
    height: 19px;
}

.timeline-tools .on {
    color: var(--blue);
}

.ruler {
    position: relative;
    flex: 1;
    overflow: hidden;
}

.ruler svg,
.lane svg,
.playhead-layer svg {
    position: absolute;
    inset: 0;
    width: 100%;
    height: 100%;
}

.ruler span {
    position: absolute;
    top: 17px;
    width: 80px;
    margin-left: -40px;
    line-height: 14px;
    text-align: center;
}

.track-section {
    display: flex;
    flex: none;
}

.track-section.grow {
    flex: 1;
    min-height: 0;
}

.tracks {
    flex: 1;
    min-width: 0;
    background: linear-gradient(to right, #1d1d1d 236px, #303030 236px, #303030 237px, #1d1d1d 237px);
}

.no-scroll {
    width: 12px;
}

.vscroll {
    display: flex;
    flex-direction: column;
    justify-content: space-between;
    align-items: center;
    width: 11px;
    margin-left: 1px;
    padding: 3px 0 2px;
    border-radius: 5px;
    background: #2f2f2f;
}

.divider {
    flex: none;
    height: 5px;
    background: #2f2f2f;
}

.track-spacer {
    height: 4px;
    border-bottom: 1px solid var(--line);
}

.track {
    display: flex;
    border-bottom: 1px solid var(--line);
    height: 25px;
}

.track.no-line {
    height: 24px;
    border-bottom: none;
}

.track.a1 {
    height: 36px;
}

.track.a2 {
    height: 40px;
}

.track-head {
    display: flex;
    align-items: center;
    width: 237px;
    padding-left: 13px;
    border-right: 1px solid var(--line);
    background: var(--panel);
}

.track-head button {
    color: #b4b4b4;
    height: 24px;
}

.track-head .patch {
    width: 32px;
    height: 100%;
    color: var(--text);
}

.track-head .patch.on {
    background: #07588c;
    color: #8fa6b5;
}

.track-head .lock {
    width: 20px;
}

.track-head .controls {
    display: flex;
    align-self: flex-start;
}

.track-head .controls button {
    width: 27px;
}

.track-head .controls .hidden {
    color: var(--blue);
}

.track-head .controls .mute.on {
    background: #4ef0ab;
    color: #17553b;
}

.track-head .name {
    margin-left: 4px;
    line-height: 24px;
}

.track-head .mix {
    margin-left: 3px;
}

.track-head .level {
    margin: 0 auto 0 58px;
    color: var(--blue);
}

.track-head .fit {
    margin-right: 8px;
    align-self: flex-start;
    height: 17px;
}

.lane {
    position: relative;
    flex: 1;
    min-width: 0;
    background: var(--lane);
    overflow: hidden;
}

.clip-label {
    position: absolute;
    display: flex;
    align-items: center;
    gap: 8px;
    top: 3px;
    color: #0c1420;
    font-size: 10px;
    line-height: 12px;
    white-space: nowrap;
    overflow: hidden;
}

.clip-label.caption-text {
    top: 0;
    font-size: 13px;
    line-height: 28px;
    color: #1b1205;
}

.fx {
    width: 12px;
    height: 11px;
    border: 1px solid #b0b0b0;
    background: #666;
    color: #151515;
    font-size: 9px;
    line-height: 9px;
    font-style: italic;
    text-align: center;
}

.playhead-layer {
    position: absolute;
    inset: 0 24px 0 237px;
    pointer-events: none;
}

.timeline-zoom {
    margin: 1px 55px 13px 13px;
}

.timeline-zoom .zoombar-thumb {
    width: 76%;
    margin-left: 23%;
}

/* audio meters */
.meters-panel {
    flex: 48;
    align-items: center;
    padding-top: 26px;
}

.meters {
    display: flex;
    flex: 1;
    width: 24px;
    border: 1px solid #000;
}

.meter {
    flex: 1;
    border-bottom: 1px solid #b9b52a;
    background: linear-gradient(#2a2a2a 8px, #000 8px, #000 9px, #1b1b1b 9px);
}

.meter + .meter {
    border-left: 1px solid #000;
}

.solo {
    display: flex;
    flex: none;
    height: 33px;
    padding-top: 4px;
    align-items: flex-start;
    color: #aaa;
}

.solo button {
    width: 11px;
    height: 16px;
    border: 1px solid #303030;
    border-radius: 2px;
    font-size: 9px;
}

/* essential graphics */
.graphics-panel {
    flex: none;
    width: 284px;
    padding: 0 17px 0 13px;
}

.graphics-title {
    display: flex;
    align-items: center;
    gap: 11px;
    flex: none;
    height: 28px;
    color: var(--bright);
}

.graphics-tabs {
    display: flex;
    gap: 23px;
    flex: none;
    height: 33px;
    padding: 8px 0 0 3px;
}

.graphics-tabs button {
    height: 25px;
    padding-top: 2px;
    border-bottom: 2px solid transparent;
}

.graphics-tabs .active {
    color: #e0e0e0;
    border-color: #e0e0e0;
}

.template-source {
    display: flex;
    flex: none;
    margin-top: 14px;
    height: 30px;
    overflow: hidden;
    border-radius: 2px;
}

.template-source button {
    flex: none;
    width: 147px;
    border: 1px solid #333;
}

.template-source .active {
    background: #151515;
    color: var(--blue);
}

.st {
    width: 14px;
    height: 13px;
    margin-right: 11px;
    border-radius: 2px;
    background: #b4b4b4;
    color: #232323;
    font-size: 9px;
    font-weight: bold;
    line-height: 13px;
}

.template-search {
    display: flex;
    gap: 6px;
    flex: none;
    margin-top: 8px;
    padding-right: 29px;
}

.template-search .field {
    height: 24px;
    padding-left: 8px;
}

.template-filter {
    display: flex;
    align-items: center;
    flex: none;
    height: 30px;
    padding-left: 10px;
}

.template-search + .template-filter {
    margin-top: 4px;
}

.template-filter label {
    display: flex;
    align-items: center;
    gap: 4px;
}

.template-filter input {
    appearance: none;
    width: 14px;
    height: 14px;
    border: 2px solid #8c8c8c;
    border-radius: 2px;
}

.template-filter .picker {
    margin-left: 17px;
    color: #444;
}

.picker.disabled select {
    width: 119px;
    height: 20px;
    border: none;
    background: #292929;
    color: #444;
    opacity: 1;
}

.template-list {
    display: flex;
    flex: 1;
    min-height: 0;
    margin-top: 10px;
    overflow: hidden;
}

.templates {
    flex: 1;
    padding: 7px 8px 0;
}

.templates figure {
    height: 158px;
}

.thumb {
    display: flex;
    height: 126px;
    padding: 10px 0;
    background: #000;
    overflow: hidden;
}

.thumb.low {
    align-items: flex-end;
}

.templates figcaption {
    padding-left: 1px;
    line-height: 26px;
    color: #a8a8a8;
}

.banner {
    width: 93px;
    height: 9px;
    padding-left: 23px;
    background: linear-gradient(to right, #061a52 75%, #000);
    color: #e8eefc;
    font-size: 6px;
    line-height: 8px;
}

.banner b,
.banner small,
.banner span {
    display: block;
}

.banner small {
    font-size: 5px;
    line-height: 5px;
    color: #7d89a8;
}

.banner.tall {
    height: 14px;
}

.banner.dim {
    color: #8e9cc0;
    font-size: 7px;
    line-height: 14px;
}

.banner.bright {
    background: linear-gradient(to right, #082a7c 80%, #000);
}

.watermark {
    margin-top: -10px;
    fill: #191919;
    font-size: 12px;
    font-weight: bold;
}

.template-scroll {
    width: 12px;
    background: #1d1d1d;
}

.template-scroll div {
    width: 10px;
    height: 37px;
    margin: 0 auto;
    border-radius: 5px;
    background: #333;
}

.template-footer {
    display: flex;
    align-items: flex-start;
    flex: none;
    height: 36px;
    padding-top: 8px;
    color: #b4b4b4;
}

.template-footer input {
    width: 115px;
    height: 12px;
}

.template-footer input::-webkit-slider-thumb {
    width: 11px;
    height: 11px;
    border-color: #8c8c8c;
    background: var(--panel);
}

.sort {
    gap: 6px;
    margin: 3px auto 0 15px;
}

/* status bar */
.statusbar {
    display: flex;
    align-items: center;
    gap: 39px;
    flex: none;
    height: 20px;
    padding-left: 2px;
    background: linear-gradient(to left, transparent 26px, #303030 26px, #303030 27px, transparent 27px), #262626;
    color: #858585;
}

/* windows taskbar */
.taskbar {
    display: grid;
    grid-template-columns: 1fr auto 1fr;
    align-items: center;
    flex: none;
    height: 48px;
    padding-bottom: 2px;
    border-top: 1px solid #454545;
    background:
        radial-gradient(ellipse 90px 50px at 1720px 34px, rgba(90, 20, 12, 0.6), transparent),
        linear-gradient(to right, #20242a 0, #20252b 100px, #142b39 240px, #162a38 330px, #20242a 520px, #1f2126 600px, #1a2833 900px, #211f24 1060px, #202124 1300px, #222024 1500px, #202020);
    color: #f2f2f2;
    font-family: 'Open Sans', sans-serif;
}

.weather {
    justify-self: start;
    gap: 4px;
    padding-left: 18px;
    font-size: 11px;
    line-height: 16px;
    text-align: left;
}

.weather span {
    color: #e0e0e0;
}

.dock {
    display: flex;
    align-items: center;
}

.app {
    position: relative;
    width: 44px;
    height: 44px;
}

.chrome {
    overflow: visible;
}

.app.run::after,
.app.focus::after {
    content: '';
    position: absolute;
    bottom: 2px;
    width: 6px;
    height: 3px;
    border-radius: 2px;
    background: #9a9a9a;
}

.app.focus {
    background: rgba(255, 255, 255, 0.07);
    border-radius: 4px;
    width: 40px;
    height: 40px;
    margin: 0 2px;
}

.app.focus::after {
    bottom: 0;
    width: 16px;
    background: #4fe0d0;
}

.dock-search {
    display: flex;
    align-items: center;
    width: 219px;
    height: 32px;
    margin: 0 3px;
    padding: 0 6px 0 10px;
    border: 1px solid #55565a;
    border-radius: 16px;
    background: #3a3b3f;
}

.dock-search input {
    flex: 1;
    min-width: 0;
    padding-left: 10px;
    font-size: 13px;
}

.dock-search input::placeholder {
    color: #c8c8c8;
}

.tray {
    display: flex;
    align-items: center;
    justify-content: flex-end;
    gap: 14px;
    padding-right: 20px;
}

.tray button {
    width: 16px;
}

.clock {
    width: 56px;
    font-size: 11px;
    line-height: 16px;
    text-align: right;
    white-space: nowrap;
}

.badge {
    width: 16px;
    height: 16px;
    margin-left: -7px;
    border-radius: 50%;
    background: #2fe6c8;
    color: #123;
    font-size: 10px;
    line-height: 16px;
    text-align: center;
}
```
FILE: timeline.js
```js
const LANE = 972; // lane units, one per pixel at full size

const pct = v => (v / LANE * 100) + '%';
const rect = (x, y, w, h, fill) => `<rect x="${x}" y="${y}" width="${w}" height="${h}" fill="${fill}"/>`;
const icon = (id, w, h) => `<svg width="${w}" height="${h}"><use href="#${id}"/></svg>`;
const svg = (h, body) => `<svg viewBox="0 0 ${LANE} ${h}" preserveAspectRatio="none" shape-rendering="crispEdges">${body}</svg>`;

// small repeatable random source for the waveforms
let seed = 7;
function rnd() {
    seed = (seed * 16807) % 2147483647;
    return seed / 2147483647;
}

// ---- captions: a number is a very short caption, a pair is [start, end]
const captions = [
    [0, 13], 44, 60, 83, 85, [91, 111], 113, 142, [144, 216], 224, 227, 230, 254, 257, 265, 272, 280, 287,
    [292, 328], 329, 341, 345, 351, 354, [357, 359], 364, [369, 371], 378, [382, 384], 386, 388, 392, 400,
    [402, 405], [409, 413], 417, 420, 426, [437, 439], 448, [465, 467], 474, [479, 483], 489, 493, 503, 509,
    [511, 515], 517, 522, [528, 547], 548, [550, 554], 559, [563, 565], 570, 574, 582, [585, 587], 590, 597, 603,
    [623, 628], 630, 636, [639, 643], [644, 647], 650, [656, 658], 660, [662, 665], 681, 687, 693, 698, [705, 709],
    723, 731, 737, [740, 743], [747, 749], 754, 768, [770, 784], 785, 786, [788, 793], 800, 804, [811, 831],
    838, 846, 858, 863, 867
];
const ranges = [[14, 91], [112, 144], [217, 294], [329, 774], [785, 812], [832, 869]];
const dimRanges = [[14, 91], [329, 770]];

function captionLane(thin, thick, under, onlyUnder) {
    let out = under.map(r => rect(r[0], 0, r[1] - r[0], 24, '#303030')).join('');
    captions.forEach(c => {
        const start = Array.isArray(c) ? c[0] : c;
        if (onlyUnder && !under.some(r => start >= r[0] && start < r[1])) return;
        out += Array.isArray(c)
            ? rect(c[0], 0, c[1] - c[0], 24, thick) + rect(c[0], 0, 1, 24, thin)
            : rect(c, 0, 1, 24, thin);
    });
    return svg(24, out);
}

// ---- clips
const groups = [
    { x: 14, end: 90, cuts: [16, 23, 25, 27, 30, 32, 34, 37, 41, 52, 57, 63, 69, 74, 77] },
    { x: 112, end: 143, cuts: [117, 123, 125, 127, 130, 134, 137, 139] },
    { x: 217, end: 293, cuts: [222, 232, 243, 249, 260, 270, 281] },
    { x: 832, end: 868, cuts: [835, 841, 844, 851, 861], light: true }
];
const longClips = [{ x: 329, end: 528 }, { x: 548, end: 773 }];

function cuts(g, h) {
    return g.cuts.map(c => rect(c, 0, 1, h, '#3a3440') + rect(c + 1, 0, 1, h, '#bfc3d2')).join('');
}

function solid(g, h, fill, cut) {
    return rect(g.x, 0, g.end - g.x, h, fill) + rect(g.x, 0, 1, h, '#c8ccd8') + (cut ? cuts(g, h) : '');
}

function corners(x, end) {
    return `<path d="M${x} 0h4l-4 4zM${end} 0h-4l4 4z" fill="#ccc"/>`;
}

// dark steps hanging from the top of each channel
function wave(x, end, top, h, fill, loud) {
    let d = `M${x} ${top}`;
    let level = 0.15;
    let gap = 0;
    for (let i = x; i < end; i++) {
        if (rnd() < 0.4) level = (loud ? 0.06 : 0.04) + rnd() * 0.24;
        if (!loud && gap <= 0 && rnd() < 0.08) gap = 1 + Math.floor(rnd() * rnd() * 12);
        const depth = gap-- > 0 ? h * (0.6 + rnd() * 0.3) : h * level;
        d += `L${i} ${top + Math.round(depth)}h1`;
    }
    return `<path d="${d}L${end} ${top}z" fill="${fill}"/>`;
}

function audioLane(h, mid, fill, dark, lightFill, lightDark) {
    let out = '';
    const start = seed;
    const draw = (c, f, k, loud) => {
        out += rect(c.x, 0, c.end - c.x, h, f);
        const s = seed;
        out += wave(c.x, c.end, 0, mid, k, loud);
        seed = s;
        out += wave(c.x, c.end, mid + 2, h - mid - 2, k, loud);
        if (c.cuts) out += cuts(c, h);
        out += rect(c.x, mid - 1, c.end - c.x, 1, '#ece6f2') + rect(c.x, mid + 1, c.end - c.x, 1, '#85808c');
    };
    groups.forEach(g => draw(g, g.light ? lightFill : fill, g.light ? lightDark : dark, true));
    longClips.forEach(c => draw(c, fill, dark, false));
    seed = start;
    return out;
}

const BLUE = '#7099cc';
const PINK = '#e383e2';
const GREEN = '#52b857';

const v2 = svg(24, solid(groups[0], 24, PINK, true));
const v1 = svg(24,
    solid(groups[0], 24, BLUE, true) +
    solid(groups[1], 24, GREEN) + corners(112, 144) +
    solid(groups[2], 24, GREEN) + corners(217, 294) +
    longClips.map(c => solid(c, 24, BLUE)).join('') + '<path d="M774 0h-4l4 4z" fill="#ccc"/>' +
    rect(785, 0, 27, 24, GREEN) + corners(785, 812) +
    solid(groups[3], 24, '#aae6fc', true));
const a1 = svg(35,
    audioLane(35, 16, PINK, '#70416f', '#fbbcf8', '#97689a') +
    rect(785, 0, 27, 35, '#28602c') + rect(785, 15, 27, 1, '#c5e0c5') + rect(785, 33, 27, 2, GREEN) + corners(785, 812));
const a2 = svg(39, audioLane(39, 18, BLUE, '#384f66', '#aae6fc', '#6d8fa3'));
const a3 = svg(24, rect(832, 0, 37, 24, '#424242'));

const fx = '<span class="fx">fx</span>';
const label = (x, w, body, cls = '') => `<div class="clip-label ${cls}" style="left:${pct(x)};width:${pct(w)}">${body}</div>`;

// ---- track rows
function head(t) {
    const toggles = {
        eye: `<button title="Toggle track output">${icon('i-eye', 13, 10)}</button>`,
        off: `<button class="hidden" title="Toggle track output">${icon('i-eye-off', 13, 12)}</button>`,
        audio: `<button class="mute${t.muted ? ' on' : ''}">M</button><button>S</button><button title="Record">${icon('i-mic', 10, 14)}</button>`
    };
    return `<div class="track-head">
        <button class="patch${t.source ? ' on' : ''}" title="Source patch">${t.source || ''}</button>
        <button class="lock" title="Lock">${icon('i-lock', 10, 11)}</button>
        <button class="patch${t.target ? ' on' : ''}">${t.id}</button>
        <div class="controls"><button title="Sync lock">${icon('i-sync', 13, 10)}</button>${toggles[t.toggle]}</div>
        ${t.name ? `<span class="name">${t.name}</span>` : ''}
    </div>`;
}

function addTracks(section, list) {
    document.querySelector(section + ' .tracks').insertAdjacentHTML('beforeend',
        list.map(t => `<div class="track ${t.cls || ''}">${t.head || head(t)}<div class="lane">${t.lane || ''}</div></div>`).join(''));
}

addTracks('#caption-tracks', [
    {
        id: 'C2', toggle: 'eye', name: 'Subtitle',
        lane: captionLane('#e8c48a', '#eda73f', ranges, false) +
            label(149, 66, 'countle...', 'caption-text') + label(297, 30, 'B...', 'caption-text')
    },
    { id: 'C1', toggle: 'off', name: 'Subtitle', cls: 'no-line', lane: captionLane('#8a7650', '#5f4417', dimRanges, true) }
]);

addTracks('#video-tracks', [
    { id: 'V5', toggle: 'eye' },
    { id: 'V4', toggle: 'eye' },
    { id: 'V3', toggle: 'eye' },
    { id: 'V2', toggle: 'eye', lane: v2 },
    {
        id: 'V1', toggle: 'eye', target: true, cls: 'no-line',
        lane: v1 + label(122, 12, fx) + label(227, 65, fx + 'Bray Wyat') +
            label(339, 170, fx + '20230822_175032.mp4 [V]') + label(558, 170, fx + '20230822_175954.mp4 [V]')
    }
]);

addTracks('#audio-tracks', [
    { id: 'A1', source: 'A1', toggle: 'audio', target: true, cls: 'a1', lane: a1 + label(339, 12, fx) + label(558, 12, fx) },
    { id: 'A2', toggle: 'audio', target: true, muted: true, cls: 'a2', lane: a2 + label(339, 12, fx) + label(558, 12, fx) },
    { id: 'A3', toggle: 'audio', target: true, lane: a3 },
    {
        head: `<div class="track-head"><span class="patch"></span><button class="lock" title="Lock">${icon('i-lock', 10, 11)}</button>
            <span class="mix">Mix</span><span class="level">0.0</span>
            <button class="fit" title="Fit"><svg width="12" height="9"><path d="M0 0l5 4.500L0 9zM12 0L7 4.500 12 9zM5.500 0h1v9h-1z" fill="currentColor"/></svg></button></div>`
    }
]);

// ---- time ruler
const times = ['00:39:57:14', '00:44:57:07', '00:49:57:00', '00:54:56:16', '00:59:56:09',
    '01:04:56:02', '01:09:55:19', '01:14:55:12', '01:19:55:04'];
let marks = rect(832, 0, 37, 43, '#454545') + rect(832, 0, 1, 43, '#2d6fb0') + rect(868, 0, 1, 43, '#2d6fb0');
for (let i = -6; i < 124; i++) {
    const x = Math.round(45.5 + i * 7.487);
    const major = i % 15 === 0;
    marks += rect(x, major ? 31 : 37, 1, major ? 11 : 5, '#585858');
}
marks += rect(952, 1, 1, 41, '#777');
ranges.forEach(r => { marks += rect(r[0], 43, r[1] - r[0], 2, '#ece81e'); });
document.getElementById('ruler').innerHTML = svg(45, marks) +
    times.map((t, i) => `<span style="left:${pct(46 + i * 112.3)}">${t}</span>`).join('');

document.getElementById('playhead-layer').innerHTML =
    `<svg viewBox="0 0 ${LANE} 410" preserveAspectRatio="none"><path d="M817 31h11v8l-5.500 4-5.500-4z" fill="#2d8ceb"/><path d="M822.500 43v367" stroke="#3a82c4"/></svg>`;

// ---- program monitor ruler
let ticks = rect(597, 0, 196, 20, '#454545') + rect(597, 0, 1, 20, '#2d8ceb') + rect(793, 0, 1, 20, '#2d8ceb');
for (let i = 0; i < 80; i++) {
    const major = (i - 11) % 12 === 0;
    ticks += rect(2 + i * 10, major ? 9 : 15, 1, major ? 11 : 5, '#666');
}
ticks += rect(693, 6, 1, 7, '#222') + rect(695, 6, 1, 7, '#222') + rect(697, 6, 1, 7, '#222');
ticks += '<path d="M534 7h11v8l-5.500 5-5.500-5z" fill="#2d8ceb"/>';
document.getElementById('program-ruler').innerHTML = ticks;
```
